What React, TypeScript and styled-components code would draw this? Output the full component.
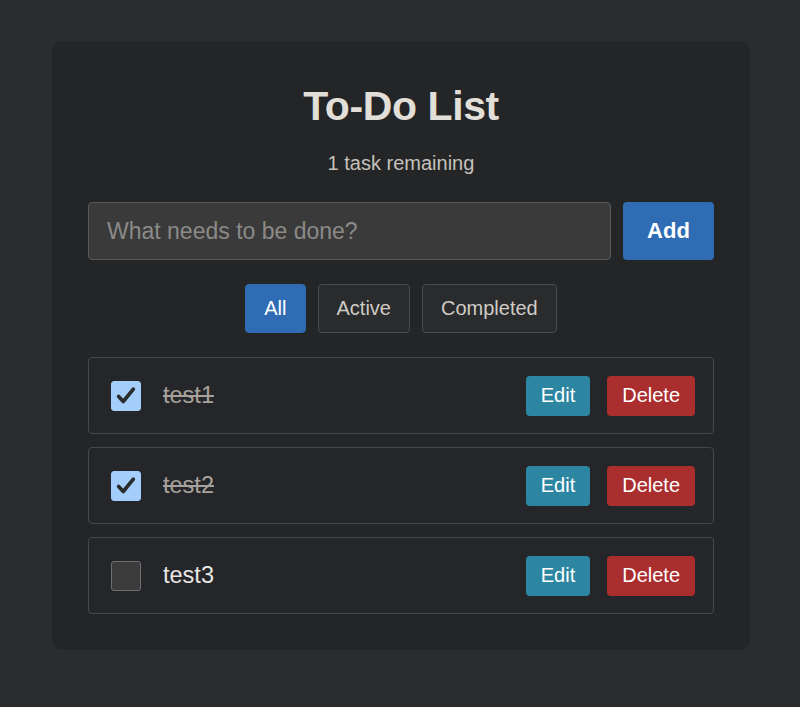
import React, { useState } from "react";
import styled, { createGlobalStyle } from "styled-components";

const Global = createGlobalStyle`
  html, body { margin: 0; padding: 0; background: #2b2c2e; }
  body { font-family: "Liberation Sans", Arial, sans-serif; }
  * { box-sizing: border-box; }
`;

const Page = styled.div`
  min-height: 707px;
  padding: 41px 50px 0 52px;
`;

const Card = styled.div`
  background: #242527;
  border-radius: 10px;
  padding: 36px;
  display: flex;
  flex-direction: column;
`;

const Title = styled.h1`
  margin: 6px 0 0;
  font-size: 41px;
  line-height: 46px;
  font-weight: 700;
  text-align: center;
  color: #e2ded8;
  letter-spacing: -0.4px;
`;

const Remaining = styled.p`
  margin: 23px 0 0;
  font-size: 20px;
  line-height: 22px;
  text-align: center;
  color: #c6c1ba;
`;

const AddRow = styled.form`
  display: flex;
  gap: 12px;
  margin-top: 28px;
`;

const TaskInput = styled.input`
  flex: 1;
  height: 58px;
  padding: 0 18px;
  background: #3a3a3b;
  border: 1px solid #58595b;
  border-radius: 4px;
  font-family: inherit;
  font-size: 23px;
  color: #e8e6e3;
  outline: none;
  &::placeholder { color: #8b8a88; }
`;

const AddButton = styled.button`
  width: 91px;
  height: 58px;
  border: none;
  border-radius: 4px;
  background: #2f6cb3;
  color: #ffffff;
  font-family: inherit;
  font-size: 22px;
  font-weight: 700;
`;

const Filters = styled.div`
  display: flex;
  justify-content: center;
  gap: 12px;
  margin-top: 24px;
`;

const FilterButton = styled.button<{ $active?: boolean }>`
  height: 49px;
  padding: 0 18px;
  border-radius: 4px;
  border: 1px solid ${(p) => (p.$active ? "#2f6cb3" : "#4b4c4e")};
  background: ${(p) => (p.$active ? "#2f6cb3" : "#2a2b2d")};
  color: ${(p) => (p.$active ? "#ffffff" : "#d0ccc5")};
  font-family: inherit;
  font-size: 20px;
`;

const List = styled.ul`
  list-style: none;
  margin: 24px 0 0;
  padding: 0;
  display: flex;
  flex-direction: column;
  gap: 13px;
`;

const Item = styled.li`
  height: 77px;
  display: flex;
  align-items: center;
  padding: 0 18px 0 22px;
  border: 1px solid #46484b;
  border-radius: 4px;
  background: #252629;
`;

const Check = styled.span<{ $checked: boolean }>`
  width: 30px;
  height: 30px;
  flex: none;
  border-radius: 3px;
  display: flex;
  align-items: center;
  justify-content: center;
  background: ${(p) => (p.$checked ? "#a3cdfa" : "#3b3b3c")};
  border: 1px solid ${(p) => (p.$checked ? "#a3cdfa" : "#6f6f70")};
`;

const Label = styled.span<{ $done: boolean }>`
  flex: 1;
  margin-left: 22px;
  font-size: 23.5px;
  color: ${(p) => (p.$done ? "#a7a29b" : "#e8e6e3")};
  text-decoration: ${(p) => (p.$done ? "line-through" : "none")};
`;

const Actions = styled.div`
  display: flex;
  gap: 17px;
`;

const ActionButton = styled.button<{ $tone: "edit" | "delete" }>`
  height: 40px;
  padding: 0 15px;
  border: none;
  border-radius: 4px;
  background: ${(p) => (p.$tone === "edit" ? "#2c86a2" : "#ab2e2f")};
  color: #ffffff;
  font-family: inherit;
  font-size: 20px;
`;

type Task = { id: number; text: string; done: boolean };

const initial: Task[] = [
  { id: 1, text: "test1", done: true },
  { id: 2, text: "test2", done: true },
  { id: 3, text: "test3", done: false },
];

const CheckMark = () => (
  <svg width="22" height="22" viewBox="0 0 24 24" fill="none">
    <path
      d="M4 12.5l5 5.5L20 4.5"
      stroke="#2a2b2d"
      strokeWidth="4"
      strokeLinecap="round"
      strokeLinejoin="round"
    />
  </svg>
);

export default function App() {
  const [tasks, setTasks] = useState<Task[]>(initial);
  const [filter, setFilter] = useState<"All" | "Active" | "Completed">("All");
  const remaining = tasks.filter((t) => !t.done).length;

  const shown = tasks.filter((t) =>
    filter === "All" ? true : filter === "Active" ? !t.done : t.done
  );

  return (
    <Page>
      <Global />
      <Card>
        <Title>To-Do List</Title>
        <Remaining>
          {remaining} task{remaining === 1 ? "" : "s"} remaining
        </Remaining>
        <AddRow onSubmit={(e) => e.preventDefault()}>
          <TaskInput placeholder="What needs to be done?" />
          <AddButton type="submit">Add</AddButton>
        </AddRow>
        <Filters>
          {(["All", "Active", "Completed"] as const).map((f) => (
            <FilterButton key={f} $active={filter === f} onClick={() => setFilter(f)}>
              {f}
            </FilterButton>
          ))}
        </Filters>
        <List>
          {shown.map((t) => (
            <Item key={t.id}>
              <Check
                $checked={t.done}
                onClick={() =>
                  setTasks((all) =>
                    all.map((x) => (x.id === t.id ? { ...x, done: !x.done } : x))
                  )
                }
              >
                {t.done && <CheckMark />}
              </Check>
              <Label $done={t.done}>{t.text}</Label>
              <Actions>
                <ActionButton $tone="edit">Edit</ActionButton>
                <ActionButton
                  $tone="delete"
                  onClick={() => setTasks((all) => all.filter((x) => x.id !== t.id))}
                >
                  Delete
                </ActionButton>
              </Actions>
            </Item>
          ))}
        </List>
      </Card>
    </Page>
  );
}
